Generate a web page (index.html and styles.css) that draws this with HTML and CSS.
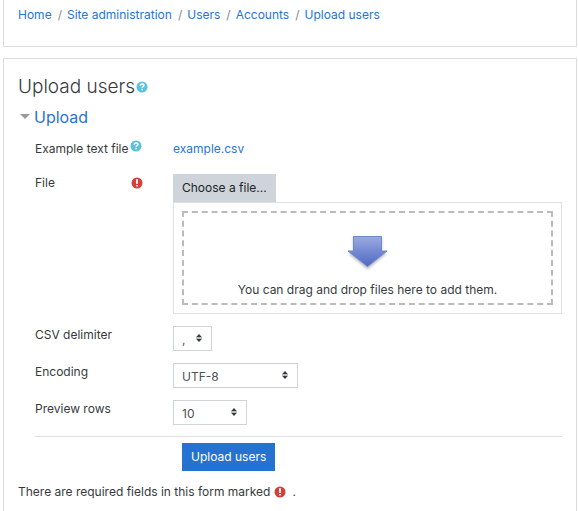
FILE: index.html
```html
<!DOCTYPE html>
<html lang="en">
<head>
<meta charset="utf-8">
<meta name="viewport" content="width=device-width, initial-scale=1">
<title>Upload users</title>
<link rel="stylesheet" href="styles.css">
</head>
<body>
<svg class="defs" aria-hidden="true">
  <symbol id="help" viewBox="0 0 12 12">
    <circle cx="6" cy="6" r="5.500" fill="#5bc0de"/>
    <path d="M4.200 4.700C4.300 3.500 5.100 3 6 3c1.100 0 1.900.6 1.900 1.600C7.900 5.800 6.200 5.700 6.200 7" fill="none" stroke="#fff" stroke-width="1.500"/>
    <rect x="5.400" y="7.800" width="1.600" height="1.500" fill="#fff"/>
  </symbol>
  <symbol id="required" viewBox="0 0 12 12">
    <circle cx="6" cy="6" r="5.500" fill="#d43f3a"/>
    <path d="M5 2.300h2L6.800 7H5.200zM5.200 7.900h1.600v1.500H5.200z" fill="#fff"/>
  </symbol>
  <symbol id="sort" viewBox="0 0 6 8">
    <path d="M3 0 6 3.200H0zM0 4.800h6L3 8z" fill="#343a40"/>
    <path d="M0 3.200h6v1.600H0z" fill="#b5b8bb"/>
  </symbol>
</svg>

<nav class="card card-nav" aria-label="Breadcrumb">
  <ol class="breadcrumb">
    <li><a href="#">Home</a></li>
    <li><a href="#">Site administration</a></li>
    <li><a href="#">Users</a></li>
    <li><a href="#">Accounts</a></li>
    <li><a href="#">Upload users</a></li>
  </ol>
</nav>

<main class="card card-main">
  <div class="title">
    <h2>Upload users</h2>
    <svg class="icon"><use href="#help"/></svg>
  </div>
  <form>
    <h3 class="section"><a href="#fields"><svg class="caret" viewBox="0 0 10 5"><path d="M0 0h10L5 5z" fill="#999"/></svg>Upload</a></h3>
    <div id="fields" class="fields">
      <div class="row">
        <div class="label">Example text file<svg class="icon raised"><use href="#help"/></svg></div>
        <a href="#">example.csv</a>
      </div>
      <div class="row row-file">
        <div class="label"><label for="file">File</label><svg class="icon end"><use href="#required"/></svg></div>
        <div class="picker">
          <button id="file" type="button" class="btn btn-secondary">Choose a file...</button>
          <div class="dropbox">
            <div class="dropzone">
              <svg class="arrow" viewBox="0 0 44 38">
                <defs>
                  <linearGradient id="blue" x1="0" y1="0" x2="0" y2="1"><stop offset="0" stop-color="#9aaae0"/><stop offset="1" stop-color="#5068c4"/></linearGradient>
                  <filter id="soft" x="-20%" y="-20%" width="140%" height="150%"><feGaussianBlur stdDeviation="1.500"/></filter>
                </defs>
                <path d="M7.500 4h28v15h5.500L21.500 35 2 19h5.500z" fill="#000" opacity=".3" filter="url(#soft)"/>
                <path d="M7.500 2.500h28V17h5.500L21.500 32.500 2 17h5.500z" fill="url(#blue)" stroke="#6f86d2"/>
              </svg>
              <span>You can drag and drop files here to add them.</span>
            </div>
          </div>
        </div>
      </div>
      <div class="row">
        <label class="label" for="delimiter">CSV delimiter</label>
        <div class="select select-s"><select id="delimiter"><option>,</option><option>;</option></select><svg><use href="#sort"/></svg></div>
      </div>
      <div class="row">
        <label class="label" for="encoding">Encoding</label>
        <div class="select select-l"><select id="encoding"><option>UTF-8</option></select><svg><use href="#sort"/></svg></div>
      </div>
      <div class="row">
        <label class="label" for="preview">Preview rows</label>
        <div class="select select-m"><select id="preview"><option>10</option><option>20</option></select><svg><use href="#sort"/></svg></div>
      </div>
      <div class="actions"><button type="submit" class="btn btn-primary">Upload users</button></div>
    </div>
    <p class="note">There are required fields in this form marked <svg class="icon"><use href="#required"/></svg> <span>.</span></p>
  </form>
</main>
</body>
</html>
```

FILE: styles.css
```css
* {
  box-sizing: border-box;
}

body {
  display: flex;
  flex-direction: column;
  gap: 11px;
  min-height: 100vh;
  margin: 0 1px 0 3px;
  background: #fff;
  color: #373a3c;
  font: 12px/18px Inter, "Liberation Sans", sans-serif;
}

a {
  color: #2a74d3;
  text-decoration: none;
}

.defs {
  position: absolute;
  width: 0;
  height: 0;
}

.card {
  border: 1px solid #dcdcdc;
  padding: 0 14px;
}

.card-nav {
  border-top: 0;
  padding-top: 6px;
  padding-bottom: 22px;
}

.card-main {
  flex: 1;
  border-bottom: 0;
  padding-top: 16px;
}

.breadcrumb {
  display: flex;
  flex-wrap: wrap;
  margin: 0;
  padding: 0;
  list-style: none;
}

.breadcrumb li + li::before {
  content: "/";
  padding: 0 5px 0 6px;
  color: #818a91;
}

.icon {
  flex: none;
  width: 12px;
  height: 12px;
}

.title {
  display: flex;
  align-items: center;
  gap: 1px;
}

h2,
h3 {
  margin: 0;
  font-weight: 400;
}

h2 {
  font-size: 19px;
  font-weight: 300;
  line-height: 24px;
}

.section {
  margin: 2px 0 11px;
  font-size: 16px;
  line-height: 24px;
}

.section a {
  display: inline-flex;
  align-items: center;
  gap: 4px;
}

.caret {
  width: 10px;
  height: 5px;
  margin-left: 2px;
}

.fields {
  display: flex;
  flex-direction: column;
  gap: 12px;
  margin-left: 17px;
}

.row {
  display: grid;
  grid-template-columns: 138px 1fr;
  align-items: start;
}

.row-file {
  margin-top: 4px;
}

.label {
  display: flex;
  padding-right: 30px;
  white-space: nowrap;
}

.raised {
  margin-left: 1px;
}

.end {
  margin: 3px 0 0 auto;
}

.btn {
  display: block;
  height: 28px;
  border: 0;
  padding: 0 9px;
  font: inherit;
}

.btn-secondary {
  background: #ced4da;
  color: #212529;
}

.btn-primary {
  background: #2672d3;
  color: #fff;
}

.dropbox {
  border: 1px solid #dee2e6;
  padding: 8px;
}

.dropzone {
  display: flex;
  flex-direction: column;
  align-items: center;
  gap: 9px;
  border: 2px dashed #bbb;
  padding: 21px 0 4px;
}

.arrow {
  width: 44px;
  height: 38px;
}

.select {
  position: relative;
}

.select select {
  display: block;
  width: 100%;
  height: 25px;
  border: 1px solid #ced4da;
  border-radius: 0;
  padding: 4px 20px 0 8px;
  appearance: none;
  background: #fff;
  color: #495057;
  font: inherit;
}

.select svg {
  position: absolute;
  top: 8px;
  right: 10px;
  width: 6px;
  height: 8px;
  pointer-events: none;
}

.select-s {
  width: 39px;
}

.select-m {
  width: 74px;
}

.select-l {
  width: 125px;
}

.actions {
  margin-top: -1px;
  border-top: 1px solid #dee2e6;
  padding: 6px 0 0 147px;
}

.note {
  display: flex;
  align-items: center;
  gap: 4px;
  margin: 12px 0 0;
}

.note span {
  padding-left: 2px;
}
```
